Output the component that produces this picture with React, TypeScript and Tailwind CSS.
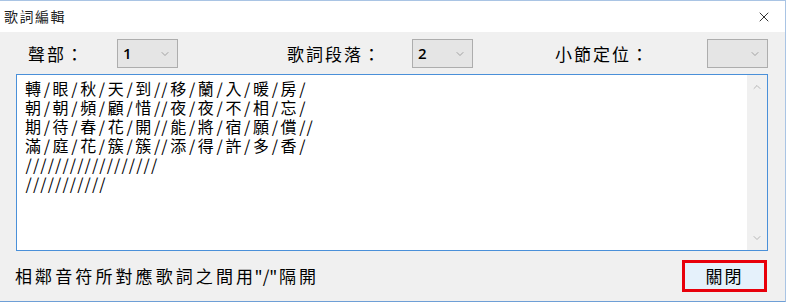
import { ChevronDown, ChevronUp, X } from 'lucide-react';

const cjk = '"Noto Sans CJK TC", "Noto Sans", sans-serif';

const lyrics = [
  '轉/眼/秋/天/到//移/蘭/入/暖/房/',
  '朝/朝/頻/顧/惜//夜/夜/不/相/忘/',
  '期/待/春/花/開//能/將/宿/願/償//',
  '滿/庭/花/簇/簇//添/得/許/多/香/',
  '//////////////////',
  '///////////',
];

// wide CJK glyphs and narrow ascii glyphs get different spacing
function Spaced({ text, wide, narrow }: { text: string; wide: string; narrow: string }) {
  return (
    <>
      {Array.from(text).map((ch, i) => (
        <span key={i} className={ch.charCodeAt(0) > 255 ? wide : narrow}>
          {ch}
        </span>
      ))}
    </>
  );
}

function Combo({ value }: { value: string }) {
  return (
    <div className="flex h-[29px] w-[61px] items-center justify-between border border-[#adadad] bg-[#e5e5e5] pl-[5px] pr-[6px]">
      <span className="text-[15px] font-semibold text-black" style={{ fontFamily: '"Open Sans", sans-serif' }}>
        {value}
      </span>
      <ChevronDown size={12} strokeWidth={1.5} className="text-[#8a8a8a]" />
    </div>
  );
}

export default function App() {
  return (
    <div className="h-[305px] w-[787px] overflow-hidden bg-white" style={{ fontFamily: cjk }}>
      <div className="flex h-[302px] w-[786px] flex-col border-t border-r border-b border-[#6e9fd6] border-t-[#a9c4e4] border-r-[#a9c4e4]">
        {/* Title bar */}
        <div className="flex h-[31px] items-center justify-between bg-white pl-[4px] pr-[13px]">
          <span className="text-[14px] tracking-[1.5px] text-[#222]">歌詞編輯</span>
          <X size={16} strokeWidth={1.2} className="text-black" />
        </div>

        {/* Body */}
        <div className="flex flex-1 flex-col bg-[#f0f0f0]">
          <div className="mt-[7px] flex items-center text-[17px] text-black">
            <span className="ml-[28px] w-[89px] tracking-[2px]">聲部：</span>
            <Combo value="1" />
            <span className="ml-[109px] w-[125px] tracking-[2px]">歌詞段落：</span>
            <Combo value="2" />
            <span className="ml-[82px] w-[152px] tracking-[2px]">小節定位：</span>
            <Combo value="" />
          </div>

          {/* Lyrics box */}
          <div className="mt-[6px] ml-[16px] flex h-[177px] w-[752px] border border-[#4a90d9] bg-white">
            <div className="flex-1 pt-[4px] pl-[8px] text-[16px] leading-[19px] text-black">
              {lyrics.map((line, i) => (
                <div key={i} className="h-[19px] whitespace-pre">
                  <Spaced
                    text={line}
                    wide="inline-block h-[19px] px-[2.1px] leading-[19px] first:pl-0"
                    narrow="inline-block h-[19px] px-[0.55px] leading-[19px]"
                  />
                </div>
              ))}
            </div>
            <div className="flex w-[20px] flex-col items-center justify-between bg-[#f0f0f0] py-[6px]">
              <ChevronUp size={12} strokeWidth={1.5} className="text-[#a3a3a3]" />
              <ChevronDown size={12} strokeWidth={1.5} className="text-[#a3a3a3]" />
            </div>
          </div>

          {/* Footer */}
          <div className="mt-[9px] flex items-center justify-between pl-[15px] pr-[18px]">
            <span className="h-[22px] text-[17px] leading-[22px] text-black">
              <Spaced
                text={'相鄰音符所對應歌詞之間用"/"隔開'}
                wide="inline-block h-[22px] px-[1.55px] leading-[22px] first:pl-0"
                narrow="inline-block h-[22px] leading-[22px]"
              />
            </span>
            <button className="flex h-[32px] w-[85px] items-center justify-center border-[3px] border-[#e8000b] bg-[#e5f1fb] text-[17px] tracking-[2px] text-black">
              關閉
            </button>
          </div>
        </div>
      </div>
    </div>
  );
}
